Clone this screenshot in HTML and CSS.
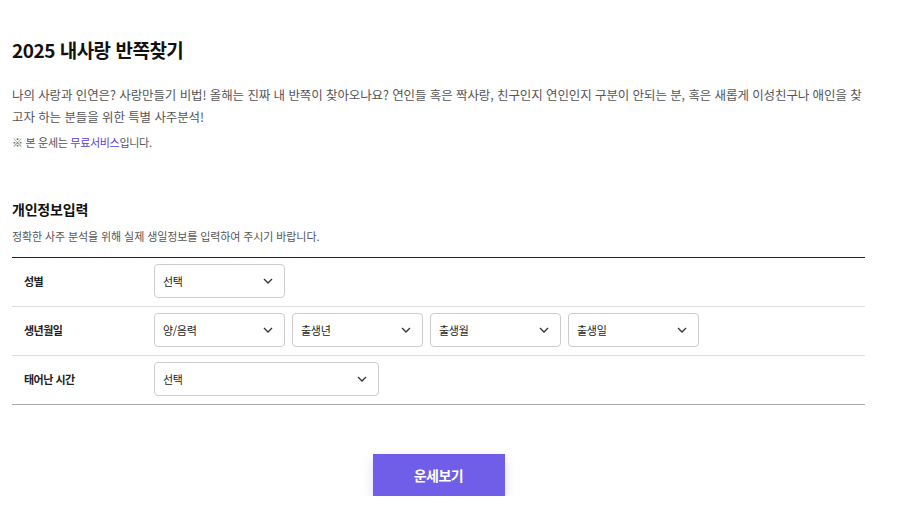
FILE: index.html
```html
<!DOCTYPE html>
<html lang="ko">
  <head>
    <meta charset="UTF-8" />
    <meta name="viewport" content="width=device-width, initial-scale=1.0" />
    <title>2025 내사랑 반쪽찾기</title>
    <link rel="stylesheet" href="styles.css">
  </head>
  <body>
    <div class="page">
      <h2 class="title">2025 내사랑 반쪽찾기</h2>
      <p class="intro">
        나의 사랑과 인연은? 사랑만들기 비법! 올해는 진짜 내 반쪽이 찾아오나요? 연인들 혹은 짝사랑, 친구인지 연인인지 구분이 안되는 분, 혹은 새롭게 이성친구나 애인을 찾고자 하는 분들을 위한 특별 사주분석!
      </p>
      <p class="note">※ 본 운세는 <span class="free">무료서비스</span>입니다.</p>

      <h3 class="section-title">개인정보입력</h3>
      <p class="section-desc">정확한 사주 분석을 위해 실제 생일정보를 입력하여 주시기 바랍니다.</p>

      <div class="info-table">
        <div class="info-row">
          <div class="info-label">성별</div>
          <div class="info-field">
            <div class="select-box">
              <select>
                <option>선택</option>
                <option>남자</option>
                <option>여자</option>
              </select>
              <svg class="chevron" width="10" height="6" viewBox="0 0 10 6"><path d="M1 1l4 4 4-4" fill="none" stroke="#333" stroke-width="1.3"/></svg>
            </div>
          </div>
        </div>
        <div class="info-row">
          <div class="info-label">생년월일</div>
          <div class="info-field">
            <div class="select-box">
              <select>
                <option>양/음력</option>
                <option>양력</option>
                <option>음력</option>
              </select>
              <svg class="chevron" width="10" height="6" viewBox="0 0 10 6"><path d="M1 1l4 4 4-4" fill="none" stroke="#333" stroke-width="1.3"/></svg>
            </div>
            <div class="select-box">
              <select id="yearSelect">
                <option>출생년</option>
              </select>
              <svg class="chevron" width="10" height="6" viewBox="0 0 10 6"><path d="M1 1l4 4 4-4" fill="none" stroke="#333" stroke-width="1.3"/></svg>
            </div>
            <div class="select-box">
              <select id="monthSelect">
                <option>출생월</option>
              </select>
              <svg class="chevron" width="10" height="6" viewBox="0 0 10 6"><path d="M1 1l4 4 4-4" fill="none" stroke="#333" stroke-width="1.3"/></svg>
            </div>
            <div class="select-box">
              <select id="daySelect">
                <option>출생일</option>
              </select>
              <svg class="chevron" width="10" height="6" viewBox="0 0 10 6"><path d="M1 1l4 4 4-4" fill="none" stroke="#333" stroke-width="1.3"/></svg>
            </div>
          </div>
        </div>
        <div class="info-row">
          <div class="info-label">태어난 시간</div>
          <div class="info-field">
            <div class="select-box wide">
              <select>
                <option>선택</option>
                <option>모름</option>
              </select>
              <svg class="chevron" width="10" height="6" viewBox="0 0 10 6"><path d="M1 1l4 4 4-4" fill="none" stroke="#333" stroke-width="1.3"/></svg>
            </div>
          </div>
        </div>
      </div>

      <div class="btn-area">
        <button class="submit-btn">운세보기</button>
      </div>
    </div>
  </body>
</html>
```

FILE: styles.css
```css
body {
  margin: 0;
  font-family: "Noto Sans CJK KR", "Noto Sans", sans-serif;
  color: #222;
  background: #fff;
}
.page {
  width: 853px;
  padding: 38px 0 0 12px;
}
.title {
  margin: 0;
  font-size: 19px;
  line-height: 24px;
  letter-spacing: -0.5px;
  font-weight: 700;
  color: #111;
}
.intro {
  margin: 22px 0 0;
  font-size: 12.5px;
  line-height: 22px;
  letter-spacing: -0.1px;
  color: #555;
}
.note {
  margin: 5px 0 0;
  font-size: 11px;
  line-height: 18px;
  letter-spacing: -0.3px;
  color: #555;
}
.free {
  color: #5b3fd6;
}
.section-title {
  margin: 48px 0 0;
  font-size: 14px;
  line-height: 20px;
  letter-spacing: -0.2px;
  font-weight: 700;
  color: #111;
}
.section-desc {
  margin: 9px 0 0;
  font-size: 11px;
  line-height: 16px;
  letter-spacing: -0.1px;
  color: #555;
}
.info-table {
  margin-top: 13px;
  border-top: 1px solid #222;
  border-bottom: 1px solid #aaa;
}
.info-row {
  display: grid;
  grid-template-columns: 142px 1fr;
  align-items: center;
  padding: 6px 0 8px;
  border-bottom: 1px solid #ddd;
}
.info-row:last-child {
  border-bottom: none;
}
.info-label {
  padding-left: 12px;
  font-size: 11px;
  font-weight: 700;
  letter-spacing: -0.5px;
  color: #222;
}
.info-field {
  display: flex;
  gap: 7px;
}
.select-box {
  position: relative;
  width: 131px;
}
.select-box.wide {
  width: 225px;
}
.select-box select {
  appearance: none;
  width: 100%;
  height: 34px;
  padding: 0 24px 0 8px;
  border: 1px solid #ccc;
  border-radius: 4px;
  background: #fff;
  font-family: "Noto Sans CJK KR", "Noto Sans", sans-serif;
  font-size: 11px;
  letter-spacing: -0.3px;
  color: #222;
  outline: none;
}
.chevron {
  position: absolute;
  right: 12px;
  top: 14px;
  pointer-events: none;
}
.btn-area {
  display: flex;
  justify-content: center;
  margin-top: 49px;
}
.submit-btn {
  width: 132px;
  height: 42px;
  border: none;
  background: #705de8;
  color: #fff;
  font-family: "Noto Sans CJK KR", "Noto Sans", sans-serif;
  font-size: 14px;
  font-weight: 700;
  letter-spacing: -0.5px;
  box-shadow: 0 4px 10px rgba(112, 93, 232, 0.22);
  cursor: pointer;
}
```
